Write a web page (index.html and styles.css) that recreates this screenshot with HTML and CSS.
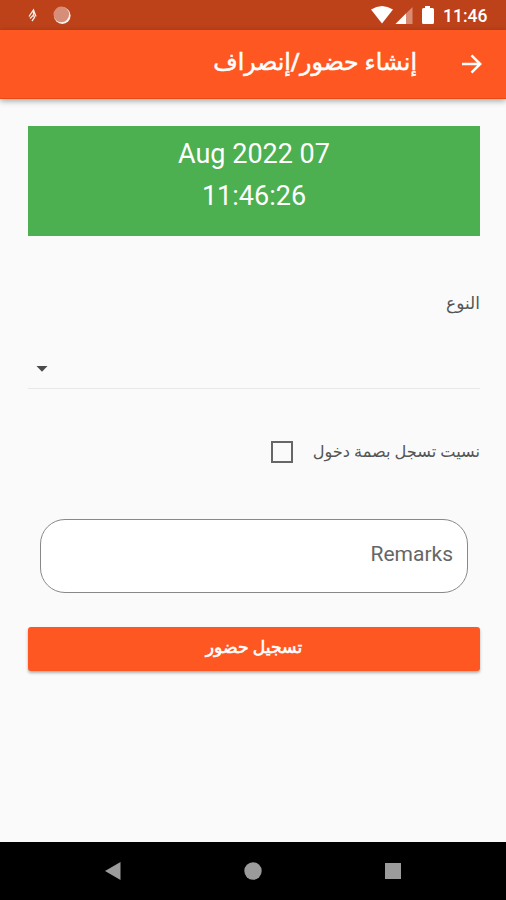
FILE: index.html
```
<!DOCTYPE html>
<html lang="ar" dir="rtl">
<head>
<meta charset="utf-8">
<title>إنشاء حضور/إنصراف</title>
<link rel="stylesheet" href="styles.css">
</head>
<body>
<header class="status" dir="ltr">
  <svg class="status-left" width="60" height="20" viewBox="0 0 60 20">
    <path d="M2 11.500 6.500 5 9 11.500M6.500 5v5L3 13.500M6.500 10l1 2.500L5 16" fill="none" stroke="#fff" stroke-width="1.300" opacity=".9"/>
    <circle cx="35.300" cy="10.600" r="8.300" fill="#fff" opacity=".92"/>
    <circle cx="34.300" cy="9.400" r="7.800" fill="#d78e78"/>
  </svg>
  <svg class="status-right" width="66" height="20" viewBox="0 0 66 20">
    <path d="M0 4.500Q11 -2.500 22 4.500L11 18.500Z" fill="#fff"/>
    <path d="M41.500 2V19H24.500Z" fill="#d98b73"/>
    <path d="M35 8.500V19H24.500Z" fill="#fff"/>
    <path d="M54 1h5v2h2.500q1.500 0 1.500 1.500v13q0 1.500-1.500 1.500h-9q-1.500 0-1.500-1.500v-13q0-1.500 1.500-1.500H54Z" fill="#fff"/>
  </svg>
  <span class="clock">11:46</span>
</header>
<div class="appbar">
  <svg class="back" width="22" height="20" viewBox="0 0 22 20"><path d="M1 10H19M10.500 1.300 19.200 10 10.500 18.700" fill="none" stroke="#fff" stroke-width="2.500"/></svg>
  <h1 class="title">إنشاء حضور/إنصراف</h1>
</div>
<main class="content">
  <div class="datetime" dir="ltr"><div>Aug 2022 07</div><div>11:46:26</div></div>
  <div class="label">النوع</div>
  <div class="select"><svg width="12" height="6" viewBox="0 0 12 6"><path d="M.5 0H11.500L6 5.700Z" fill="#4a4a4a"/></svg></div>
  <div class="check-row"><span class="check-label">نسيت تسجل بصمة دخول</span><span class="box"></span></div>
  <div class="remarks">Remarks</div>
  <div class="button"><span class="button-label">تسجيل حضور</span></div>
</main>
<nav class="navbar" dir="ltr">
  <svg width="16" height="18" viewBox="0 0 16 18"><path d="M0 9 15.500 0V18Z" fill="#9b9b9b"/></svg>
  <svg width="18" height="18" viewBox="0 0 18 18"><circle cx="9" cy="9" r="8.700" fill="#9b9b9b"/></svg>
  <svg width="16" height="16" viewBox="0 0 16 16"><path d="M0 0H16V16H0Z" fill="#9b9b9b"/></svg>
</nav>
</body>
</html>
```
FILE: styles.css
```
* { box-sizing: border-box; }
body {
  margin: 0;
  height: 900px;
  display: flex;
  flex-direction: column;
  overflow: hidden;
  background: #fafafa;
  font-family: Roboto, "DejaVu Sans", sans-serif;
}
svg { display: block; flex: none; }
.status {
  height: 30px;
  flex: none;
  display: flex;
  align-items: center;
  background: #bd421a;
  padding: 0 19px 0 27px;
}
.status-right { margin-left: auto; }
.clock {
  width: 44px;
  margin-left: 6px;
  font-size: 17.500px;
  font-weight: 500;
  line-height: 30px;
  padding-top: 2px;
  color: #fff;
}
.appbar {
  height: 69px;
  flex: none;
  display: flex;
  align-items: center;
  padding: 0 23px;
  background: #ff5722;
  border-bottom: 1px solid #e84b17;
  box-shadow: 0 2px 6px rgba(0, 0, 0, .35);
}
.title {
  margin: 0 44px 0 0;
  padding-bottom: 5px;
  font-size: 23.600px;
  font-weight: 500;
  line-height: 30px;
  color: #fff;
  -webkit-text-stroke: .5px #fff;
  white-space: nowrap;
}
.content {
  flex: 1;
  padding: 27px 26px 0 28px;
}
.datetime {
  height: 110px;
  padding-top: 7px;
  background: #4caf50;
  color: #fff;
  font-size: 27px;
  line-height: 42px;
  text-align: center;
}
.label {
  margin-top: 52px;
  height: 30px;
  font-size: 17px;
  line-height: 30px;
  color: #555;
}
.select {
  height: 71px;
  display: flex;
  justify-content: flex-end;
  align-items: flex-end;
  padding: 0 0 16px 8px;
  border-bottom: 1px solid #e8e8e8;
}
.check-row {
  margin-top: 48px;
  height: 30px;
  display: flex;
  align-items: center;
}
.check-label {
  padding-bottom: 2px;
  font-size: 16.200px;
  color: #555;
  white-space: nowrap;
}
.box {
  width: 22px;
  height: 22px;
  margin-right: 20px;
  border: 2px solid #666;
}
.remarks {
  margin: 52px 12px 0;
  height: 74px;
  padding-right: 14px;
  border: 1px solid #888;
  border-radius: 25px;
  background: #fff;
  color: #666;
  font-size: 21px;
  line-height: 68px;
}
.button {
  margin-top: 34px;
  height: 44px;
  display: flex;
  justify-content: center;
  border-radius: 3px;
  background: #ff5722;
  box-shadow: 0 2px 3px rgba(0, 0, 0, .3);
}
.button-label {
  font-size: 17.200px;
  font-weight: 500;
  line-height: 41px;
  color: #fff;
  -webkit-text-stroke: .6px #fff;
}
.navbar {
  height: 58px;
  flex: none;
  display: flex;
  align-items: center;
  justify-content: space-between;
  padding: 0 105px;
  background: #000;
}
```
